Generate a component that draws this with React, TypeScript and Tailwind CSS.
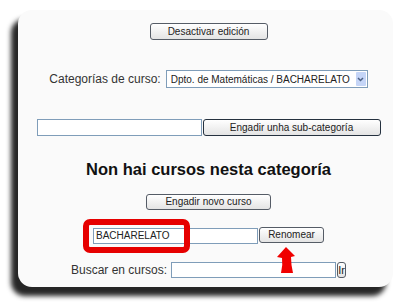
export default function App() {
  const btn =
    "flex items-center justify-center rounded-[3px] border border-[#555c66] bg-gradient-to-b from-[#ffffff] to-[#e4e4e4] text-[10px] text-[#222] leading-none";
  const input = "h-[16px] border border-[#7f9db9] bg-white";

  return (
    <div className="w-[400px] h-[306px] overflow-hidden bg-white pt-[10px] pl-[18px] font-['Liberation_Sans',Arial,sans-serif]">
      <div className="relative w-[375px] h-[277px] rounded-[14px] bg-[#fafafa] shadow-[-7px_9px_5px_rgba(0,0,0,0.85)] flex flex-col items-center pl-[6px]">
        <button className={`${btn} mt-[13px] w-[118px] h-[17px]`}>Desactivar edición</button>

        <div className="mt-[30px] flex items-center gap-[5px] h-[18px]">
          <span className="text-[12px] text-[#333]">Categorías de curso:</span>
          <div className="flex items-center w-[202px] h-[18px] border border-[#7f9db9] bg-white pl-[4px] pr-[1px]">
            <span className="flex-1 overflow-hidden text-[10px] text-[#222] whitespace-nowrap">Dpto. de Matemáticas / BACHARELATO</span>
            <span className="flex items-center justify-center w-[10px] h-[14px] bg-[#c5d5f7] rounded-[1px]">
              <svg width="7" height="5" viewBox="0 0 7 5">
                <path d="M1 1 L3.5 3.5 L6 1" stroke="#4d6185" strokeWidth="1.5" fill="none" />
              </svg>
            </span>
          </div>
        </div>

        <div className="mt-[31px] flex items-center gap-[1px] h-[17px]">
          <div className={`${input} w-[165px] h-[17px]`} />
          <button className={`${btn} w-[178px] h-[17px] border-[#25313f] border-[1.5px]`}>Engadir unha sub-categoría</button>
        </div>

        <h2 className="mt-[24px] h-[19px] leading-[19px] text-[16.5px] font-bold text-[#111]">Non hai cursos nesta categoría</h2>

        <button className={`${btn} mt-[15px] w-[125px] h-[16px]`}>Engadir novo curso</button>

        <div className="mt-[17px] flex items-center gap-[1px] h-[17px]">
          <div className={`${input} w-[165px] flex items-center pl-[2px] text-[10px] text-[#222]`}>BACHARELATO</div>
          <button className={`${btn} w-[65px] h-[16px] -mt-[1px]`}>Renomear</button>
        </div>

        <div className="mt-[18px] flex items-center h-[16px]">
          <span className="text-[12px] text-[#333] mr-[4px]">Buscar en cursos:</span>
          <div className={`${input} w-[165px]`} />
          <button className={`${btn} ml-[1px] w-[9px] h-[16px] text-[#4a1a4a] text-[11px]`}>Ir</button>
        </div>

        <div className="absolute left-[65px] top-[209px] w-[107px] h-[34px] rounded-[7px] border-[6px] border-[#e60000]" />

        <svg className="absolute left-[256px] top-[235px]" width="26" height="30" viewBox="0 0 26 30">
          <path d="M12 2 Q13 3 21 11 L17 12 Q17 20 19 28 L7 28 Q9 20 8 13 L3 12 Z" fill="#f00000" />
        </svg>
      </div>
    </div>
  );
}
